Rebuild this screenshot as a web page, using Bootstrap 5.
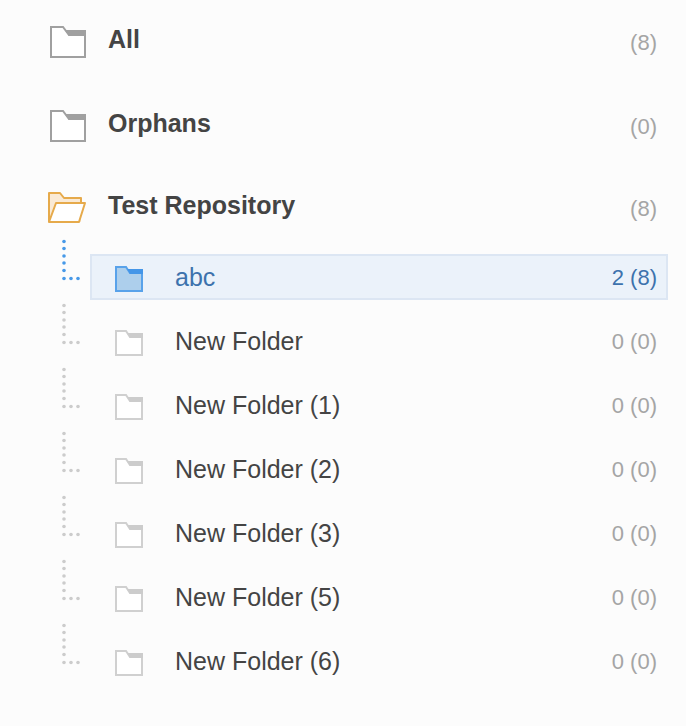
<!DOCTYPE html>
<html lang="en">
<head>
<meta charset="utf-8">
<meta name="viewport" content="width=device-width, initial-scale=1">
<title>Folders</title>
<link href="https://cdn.jsdelivr.net/npm/bootstrap@5.3.0/dist/css/bootstrap.min.css" rel="stylesheet">
<style>
body{background:#fcfcfc;color:#444;font-family:"Liberation Sans",Arial,sans-serif;font-size:25px;line-height:30px}
a{color:inherit}
svg{display:block;flex:none}
.root-item{--line:#a0a0a0;--tab:#a0a0a0;--face:#fff;padding:24px 29px 24px 48px}
.root-item.open-root{padding:22px 29px 12px 48px}
.root-item .label{margin-left:20px;padding-bottom:6px}
.count{font-size:22px;color:#a5a5a5;padding-top:2px}
.root-item .count{line-height:34px}
.branch{--line:#d0d0d0;--tab:#ccc;--face:#fff;--wire:#ccc;padding:0 18px 0 60px;min-height:64px}
.branch.active{--line:#58a2ea;--tab:#4496e8;--face:#adcfec;--wire:#4799e8}
.leaf{margin:16px 0 2px 8px;border:2px solid transparent;padding:5px 9px 5px 22px}
.leaf .label{margin-left:31px}
.wire{fill:var(--wire)}
.outline{fill:var(--face);stroke:var(--line);stroke-width:2}
.tab{fill:var(--tab)}
.active .leaf{background:#ebf2fa;border-color:#dce6f3}
.active .leaf,.active .count{color:#3d72ad}
</style>
<script src="https://cdn.jsdelivr.net/npm/bootstrap@5.3.0/dist/js/bootstrap.bundle.min.js"></script>
</head>
<body>
<svg width="0" height="0" class="position-absolute" aria-hidden="true">
<symbol id="folder-large" viewBox="0 0 40 36"><path class="outline" d="M3 3H15L21 11H37V33H3Z"/><path class="tab" d="M17 6H38V12H21Z"/></symbol>
<symbol id="folder-small" viewBox="0 0 30 30"><path class="outline" d="M2 5H12L16 11H28V29H2Z"/><path class="tab" d="M13 7H29V12H16Z"/></symbol>
<symbol id="connector" viewBox="0 0 22 46"><circle cx="4" cy="3.5" r="1.8"/><circle cx="4" cy="10.5" r="1.8"/><circle cx="4" cy="18" r="1.8"/><circle cx="4" cy="25" r="1.8"/><circle cx="4" cy="32.5" r="1.8"/><circle cx="4" cy="40.5" r="1.8"/><circle cx="11" cy="40.5" r="1.8"/><circle cx="18" cy="40.5" r="1.8"/></symbol>
</svg>
<nav aria-label="Folders">
<ul class="list-unstyled mb-0">
<li><a href="#" class="root-item d-flex align-items-center text-decoration-none"><svg width="40" height="36"><use href="#folder-large"/></svg><span class="label fw-bold">All</span><span class="count ms-auto">(8)</span></a></li>
<li><a href="#" class="root-item d-flex align-items-center text-decoration-none"><svg width="40" height="36"><use href="#folder-large"/></svg><span class="label fw-bold">Orphans</span><span class="count ms-auto">(0)</span></a></li>
<li><a href="#" class="root-item open-root d-flex align-items-center text-decoration-none"><svg width="40" height="36" viewBox="0 0 40 36" stroke="#e6aa4b" stroke-width="2" stroke-linejoin="round"><path fill="#faead5" d="M1 32V3H12L16 8H33V13V32Z" stroke="none"/><path fill="none" d="M1 32V3H12L16 8H33V13"/><path fill="#fff" d="M8 13H37L31 32H1Z"/></svg><span class="label fw-bold">Test Repository</span><span class="count ms-auto">(8)</span></a>
<ul class="list-unstyled mb-0">
<li class="branch d-flex align-items-start active"><svg class="wire" width="22" height="46"><use href="#connector"/></svg><a href="#" aria-current="true" class="leaf flex-grow-1 d-flex align-items-center text-decoration-none"><svg width="30" height="30"><use href="#folder-small"/></svg><span class="label">abc</span><span class="count ms-auto">2 (8)</span></a></li>
<li class="branch d-flex align-items-start"><svg class="wire" width="22" height="46"><use href="#connector"/></svg><a href="#" class="leaf flex-grow-1 d-flex align-items-center text-decoration-none"><svg width="30" height="30"><use href="#folder-small"/></svg><span class="label">New Folder</span><span class="count ms-auto">0 (0)</span></a></li>
<li class="branch d-flex align-items-start"><svg class="wire" width="22" height="46"><use href="#connector"/></svg><a href="#" class="leaf flex-grow-1 d-flex align-items-center text-decoration-none"><svg width="30" height="30"><use href="#folder-small"/></svg><span class="label">New Folder (1)</span><span class="count ms-auto">0 (0)</span></a></li>
<li class="branch d-flex align-items-start"><svg class="wire" width="22" height="46"><use href="#connector"/></svg><a href="#" class="leaf flex-grow-1 d-flex align-items-center text-decoration-none"><svg width="30" height="30"><use href="#folder-small"/></svg><span class="label">New Folder (2)</span><span class="count ms-auto">0 (0)</span></a></li>
<li class="branch d-flex align-items-start"><svg class="wire" width="22" height="46"><use href="#connector"/></svg><a href="#" class="leaf flex-grow-1 d-flex align-items-center text-decoration-none"><svg width="30" height="30"><use href="#folder-small"/></svg><span class="label">New Folder (3)</span><span class="count ms-auto">0 (0)</span></a></li>
<li class="branch d-flex align-items-start"><svg class="wire" width="22" height="46"><use href="#connector"/></svg><a href="#" class="leaf flex-grow-1 d-flex align-items-center text-decoration-none"><svg width="30" height="30"><use href="#folder-small"/></svg><span class="label">New Folder (5)</span><span class="count ms-auto">0 (0)</span></a></li>
<li class="branch d-flex align-items-start"><svg class="wire" width="22" height="46"><use href="#connector"/></svg><a href="#" class="leaf flex-grow-1 d-flex align-items-center text-decoration-none"><svg width="30" height="30"><use href="#folder-small"/></svg><span class="label">New Folder (6)</span><span class="count ms-auto">0 (0)</span></a></li>
</ul>
</li>
</ul>
</nav>
</body>
</html>
